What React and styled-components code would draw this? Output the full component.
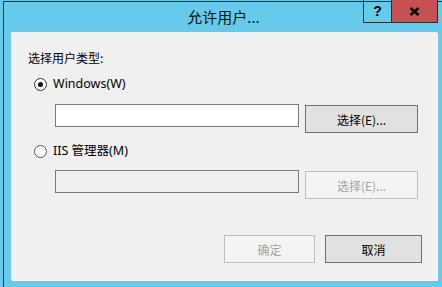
import React from "react"
import styled, { createGlobalStyle } from "styled-components"

const GlobalStyle = createGlobalStyle`
  html, body {
    margin: 0;
    padding: 0;
    background: #66caea;
  }
`

const Screen = styled.div`
  width: 442px;
  height: 287px;
  overflow: hidden;
  background: #66caea;
  font-family: "Noto Sans", "Noto Sans CJK SC", sans-serif;
  font-size: 12px;
  color: #000;
`

const Window = styled.div`
  margin: 1px 0 0 3px;
  width: 439px;
  height: 285px;
  border-left: 1px solid #2b2b2b;
  border-top: 1px solid #2b2b2b;
  display: flex;
  flex-direction: column;
`

const TitleBar = styled.div`
  height: 30px;
  flex: none;
  display: grid;
  grid-template-columns: 1fr auto 1fr;
  align-items: start;
`

const Title = styled.div`
  grid-column: 2;
  align-self: center;
  font-family: "Noto Sans CJK SC", sans-serif;
  font-size: 15px;
  line-height: 20px;
  color: #111;
`

const Caption = styled.div`
  grid-column: 3;
  justify-self: end;
  display: flex;
  margin: -2px 5px 0 0;
  border-left: 1px solid #2d2d2d;
  border-bottom: 1px solid #2d2d2d;
  border-right: 1px solid #2d2d2d;
`

const CaptionButton = styled.div`
  width: ${(p) => p.$w}px;
  height: 22px;
  display: flex;
  align-items: center;
  justify-content: center;
  background: ${(p) => (p.$close ? "#c75050" : "transparent")};
  border-left: ${(p) => (p.$close ? "1px solid #2d2d2d" : "none")};
  font-family: "Liberation Sans", sans-serif;
  font-weight: bold;
  font-size: 14px;
  color: #000;
`

const Panel = styled.div`
  flex: 1;
  margin: 0 6px 7px 7px;
  background: #f0f0f0;
  box-shadow: 1px 1px 0 #f6f6f6;
  padding: 18px 15px 17px 17px;
  display: flex;
  flex-direction: column;
`

const Label = styled.div`
  font-family: "Noto Sans CJK SC", sans-serif;
  line-height: 16px;
`

const RadioRow = styled.label`
  display: flex;
  align-items: center;
  height: 16px;
  margin: ${(p) => p.$mt}px 0 0 6px;
  gap: 6px;
  line-height: 16px;
  font-size: 12.5px;
`

const RadioDot = styled.span`
  flex: none;
  width: 11px;
  height: 11px;
  border-radius: 50%;
  border: 1px solid ${(p) => (p.$checked ? "#333" : "#555")};
  background: #fff;
  display: flex;
  align-items: center;
  justify-content: center;

  &::after {
    content: "";
    width: 5px;
    height: 5px;
    border-radius: 50%;
    background: ${(p) => (p.$checked ? "#111" : "transparent")};
  }
`

const FieldRow = styled.div`
  display: flex;
  align-items: flex-start;
  gap: 6px;
  margin: ${(p) => p.$mt}px 0 0 27px;
`

const Field = styled.div`
  width: 242px;
  height: 21px;
  border: 1px solid #7a7a7a;
  background: ${(p) => (p.$disabled ? "#f0f0f0" : "#fff")};
`

const Button = styled.div`
  box-sizing: border-box;
  width: ${(p) => p.$w}px;
  height: 28px;
  margin-top: ${(p) => p.$mt || 0}px;
  display: flex;
  align-items: center;
  justify-content: center;
  font-family: "Noto Sans CJK SC", sans-serif;
  font-size: 12px;
  border: 1px solid ${(p) => (p.$disabled ? "#bfbfbf" : "#707070")};
  background: ${(p) => (p.$disabled ? "#f4f4f4" : "#e1e1e1")};
  color: ${(p) => (p.$disabled ? "#a3a3a3" : "#000")};
`

const Footer = styled.div`
  margin-top: auto;
  display: flex;
  justify-content: flex-end;
  gap: 10px;
`

const CloseIcon = () => (
  <svg width="11" height="9" viewBox="0 0 11 9">
    <path d="M1.5 1 L9.5 8 M9.5 1 L1.5 8" stroke="#000" strokeWidth="2.4" strokeLinecap="butt" />
  </svg>
)

export default function App() {
  return (
    <Screen>
      <GlobalStyle />
      <Window>
        <TitleBar>
          <Title>允许用户...</Title>
          <Caption>
            <CaptionButton $w={27}>?</CaptionButton>
            <CaptionButton $w={45} $close>
              <CloseIcon />
            </CaptionButton>
          </Caption>
        </TitleBar>
        <Panel>
          <Label>选择用户类型:</Label>
          <RadioRow $mt={10}>
            <RadioDot $checked />
            <span>Windows(W)</span>
          </RadioRow>
          <FieldRow $mt={12}>
            <Field />
            <Button $w={113} $mt={1}>
              选择(E)...
            </Button>
          </FieldRow>
          <RadioRow $mt={10}>
            <RadioDot />
            <span>IIS 管理器(M)</span>
          </RadioRow>
          <FieldRow $mt={11}>
            <Field $disabled />
            <Button $w={113} $mt={1} $disabled>
              选择(E)...
            </Button>
          </FieldRow>
          <Footer>
            <Button $w={91} $disabled>
              确定
            </Button>
            <Button $w={97}>取消</Button>
          </Footer>
        </Panel>
      </Window>
    </Screen>
  )
}
